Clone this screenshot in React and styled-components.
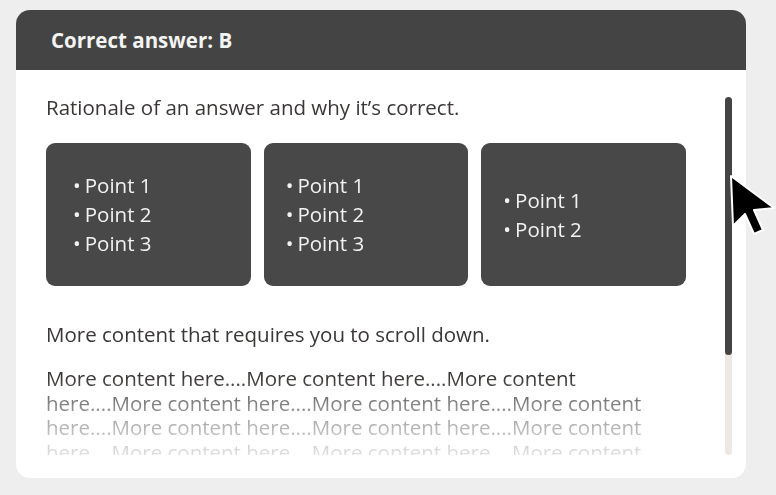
import React from "react";
import styled, { createGlobalStyle } from "styled-components";

const Global = createGlobalStyle`
  html, body { margin: 0; padding: 0; background: #eeeeee; }
  body { font-family: "Open Sans", "Noto Sans", sans-serif; }
`;

const Page = styled.div`
  width: 776px;
  height: 495px;
  box-sizing: border-box;
  padding: 10px 30px 17px 16px;
  position: relative;
  overflow: hidden;
`;

const Panel = styled.section`
  height: 100%;
  display: flex;
  flex-direction: column;
  background: #ffffff;
  border-radius: 14px;
  overflow: hidden;
`;

const Header = styled.header`
  height: 60px;
  flex: none;
  background: #444444;
  display: flex;
  align-items: center;
  padding-left: 35px;
  color: #f4f4f4;
  font-size: 20.5px;
  font-weight: 700;
`;

const Body = styled.div`
  flex: 1;
  min-height: 0;
  display: flex;
  gap: 39px;
  padding: 22px 14px 23px 30px;
`;

const Scroller = styled.div`
  width: 640px;
  flex: none;
  overflow: hidden;
  color: #3a3736;
  -webkit-mask-image: linear-gradient(to bottom, #000 0, #000 286px, rgba(0,0,0,0.62) 312px, rgba(0,0,0,0.36) 336px, rgba(0,0,0,0.16) 362px);
  mask-image: linear-gradient(to bottom, #000 0, #000 286px, rgba(0,0,0,0.62) 312px, rgba(0,0,0,0.36) 336px, rgba(0,0,0,0.16) 362px);
`;

const Lead = styled.p`
  margin: 0;
  font-size: 20.5px;
  line-height: 30px;
`;

const Cards = styled.div`
  display: grid;
  grid-template-columns: repeat(3, 1fr);
  gap: 13px;
  margin: 21px 0 0;
`;

const Card = styled.ul`
  margin: 0;
  height: 143px;
  box-sizing: border-box;
  list-style: none;
  padding: 0 0 0 ${(p) => p.$pad || 26}px;
  background: #484848;
  border-radius: 9px;
  display: flex;
  flex-direction: column;
  justify-content: center;
  color: #f2f2f2;
  font-size: 20.5px;
  line-height: 29px;
`;

const Point = styled.li`
  &::before {
    content: "•";
    margin-right: 4px;
  }
`;

const Para = styled.p`
  margin: ${(p) => p.$top} 0 0;
  font-size: 20.5px;
  line-height: ${(p) => p.$lh || "30px"};
`;

const Track = styled.div`
  width: 7px;
  flex: none;
  margin: 5px 0 0;
  background: #ebe8e5;
  border-radius: 4px;
  display: flex;
  flex-direction: column;
`;

const Thumb = styled.div`
  height: 258px;
  background: #444444;
  border-radius: 4px;
`;

const Cursor = styled.svg`
  position: absolute;
  left: 727px;
  top: 173px;
  width: 52px;
  height: 64px;
`;

const cards = [
  { pad: 27, items: ["Point 1", "Point 2", "Point 3"] },
  { pad: 22, items: ["Point 1", "Point 2", "Point 3"] },
  { pad: 22, items: ["Point 1", "Point 2"] },
];

export default function App() {
  return (
    <>
      <Global />
      <Page>
        <Panel>
          <Header>Correct answer: B</Header>
          <Body>
            <Scroller>
              <Lead>Rationale of an answer and why it’s correct.</Lead>
              <Cards>
                {cards.map((c, i) => (
                  <Card key={i} $pad={c.pad}>
                    {c.items.map((t) => (
                      <Point key={t}>{t}</Point>
                    ))}
                  </Card>
                ))}
              </Cards>
              <Para $top="33px">More content that requires you to scroll down.</Para>
              <Para $top="17px" $lh="24.5px">
                More content here....More content here....More content here....More content here....More content here....More content here....More content here....More content here....More content here....More content here....More content here....More content here....More content here....More content here....More content
              </Para>
            </Scroller>
            <Track>
              <Thumb />
            </Track>
          </Body>
        </Panel>
        <Cursor viewBox="0 0 52 64">
          <path
            d="M4 3 L6 53 L18 41 L27 61 L36 57 L27 37 L47 35 Z"
            fill="#000"
            stroke="#fff"
            strokeWidth="2"
            strokeLinejoin="round"
          />
        </Cursor>
      </Page>
    </>
  );
}
